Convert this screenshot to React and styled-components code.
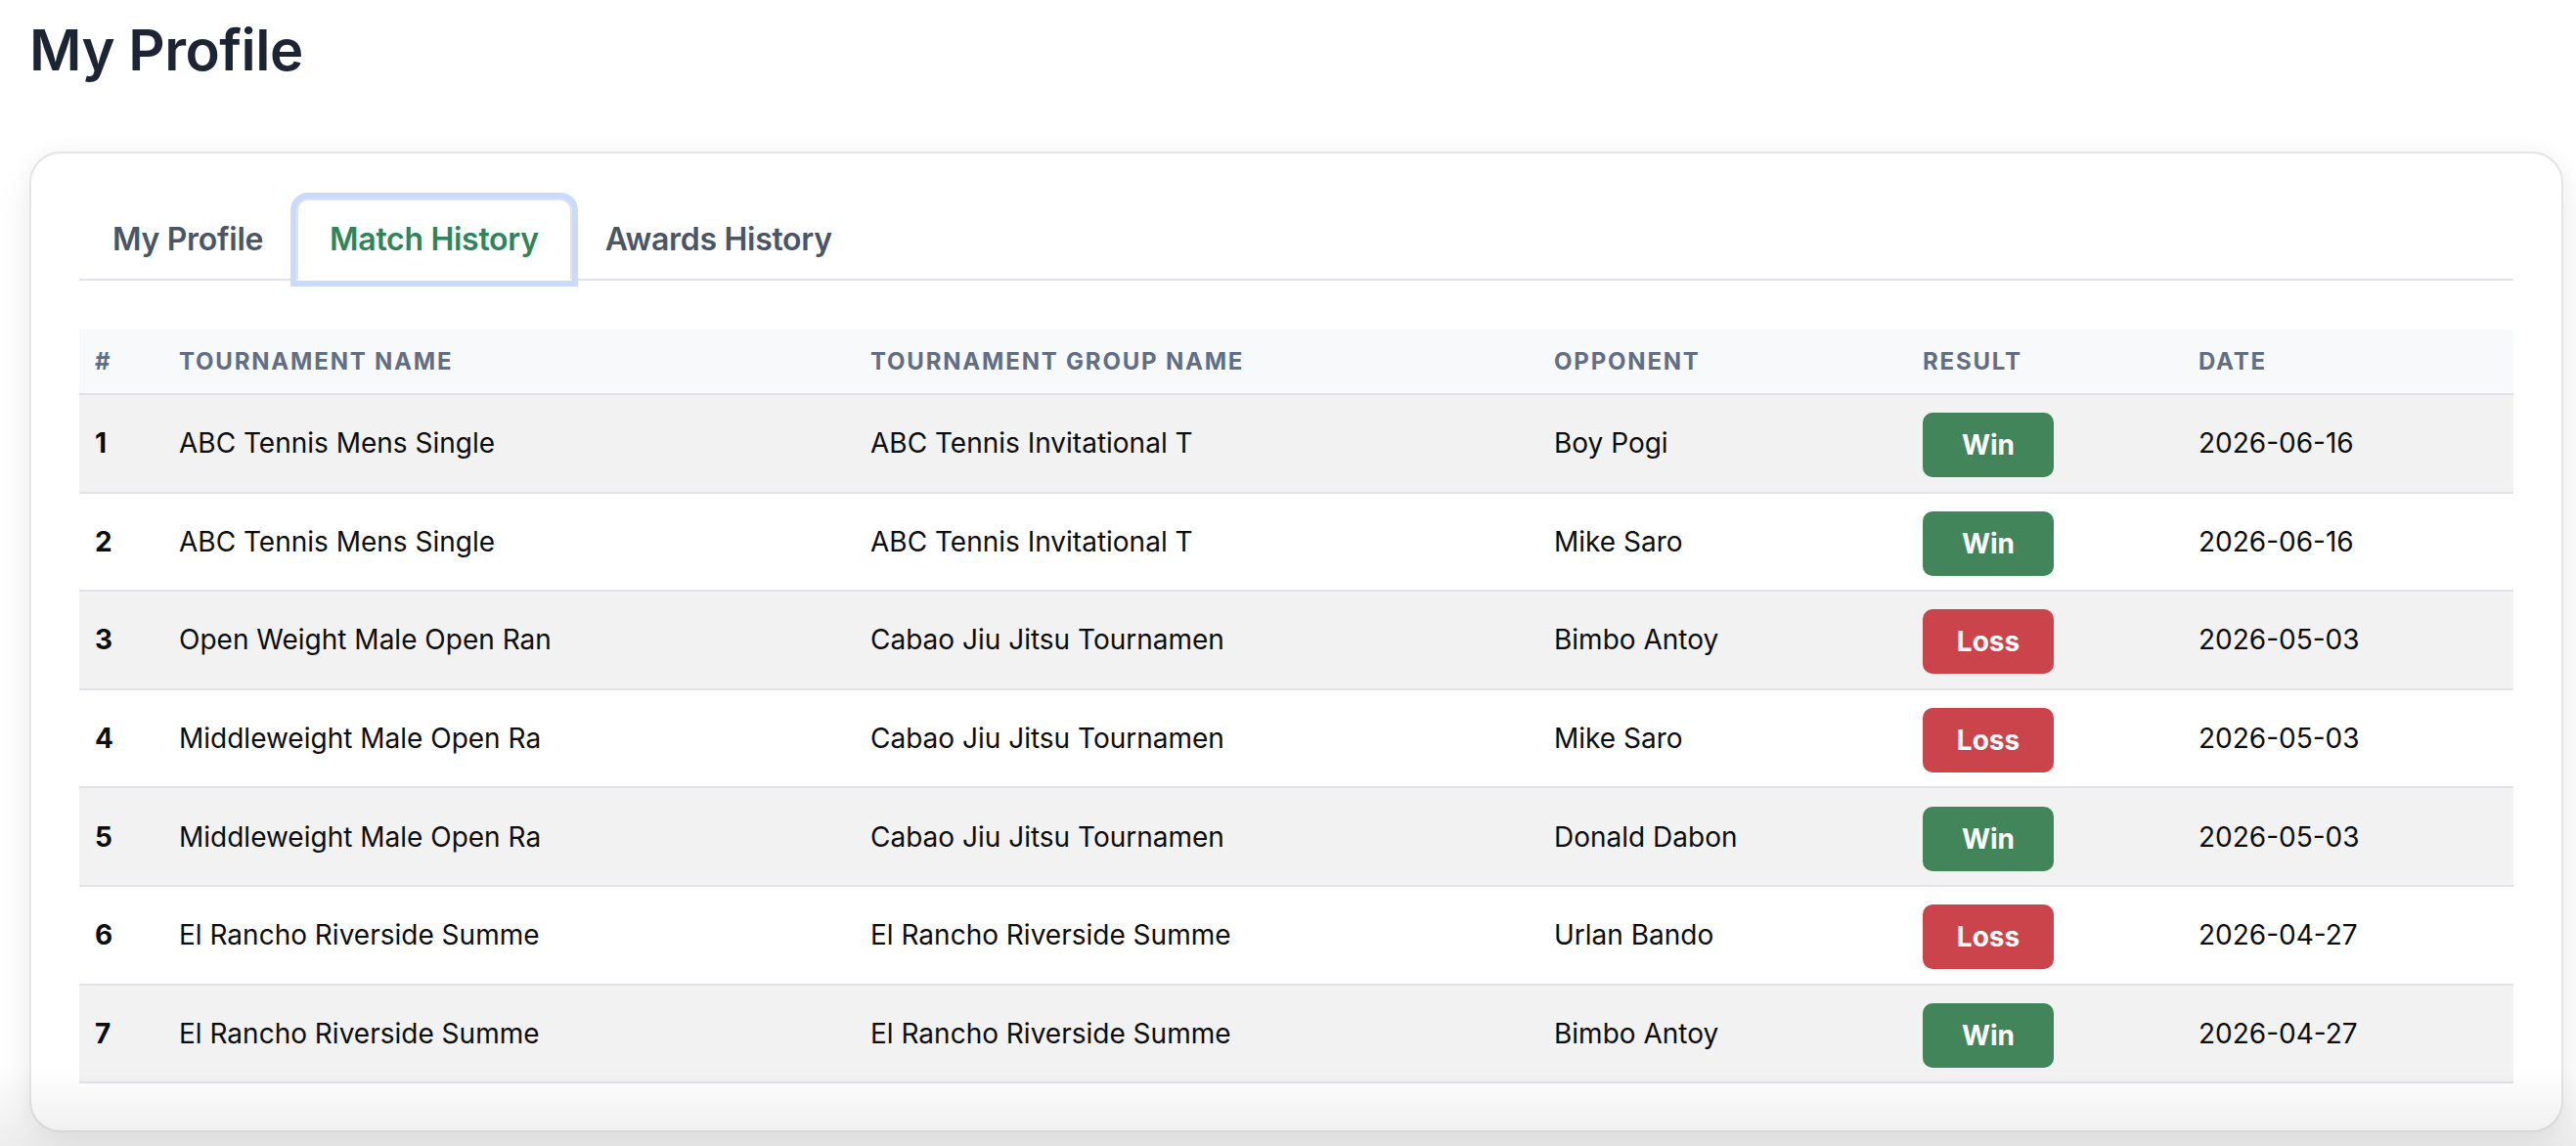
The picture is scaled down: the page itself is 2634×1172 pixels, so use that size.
import React, { useState } from "react";
import styled, { createGlobalStyle } from "styled-components";

const GlobalStyle = createGlobalStyle`
  html, body {
    margin: 0;
    padding: 0;
    background: #fff;
    font-family: Inter, "Noto Sans", "Liberation Sans", sans-serif;
  }
  * { box-sizing: border-box; }
`;

const Page = styled.main`
  padding: 15px 13px 40px 30px;
`;

// soft fade the screenshot shows along the bottom of the window
const BottomFade = styled.div`
  position: fixed;
  left: 0;
  right: 0;
  bottom: 0;
  height: 80px;
  pointer-events: none;
  background: linear-gradient(to bottom, rgba(0, 0, 0, 0), rgba(0, 0, 0, 0.07));
`;

const Title = styled.h1`
  margin: 0 0 68px 0;
  font-size: 58px;
  line-height: 72px;
  font-weight: 600;
  color: #1d2433;
  letter-spacing: -0.5px;
`;

const Card = styled.section`
  background: #fff;
  border: 2px solid #e4e5e9;
  border-radius: 32px;
  padding: 46px 49px 48px 49px;
  box-shadow: 0 16px 40px rgba(0, 0, 0, 0.07), 0 0 24px rgba(0, 0, 0, 0.03);
`;

const TabList = styled.div`
  display: flex;
  align-items: flex-end;
  border-bottom: 2px solid #e2e3e8;
  margin-bottom: 50px;
`;

const Tab = styled.button`
  font-family: inherit;
  font-size: 32px;
  font-weight: 600;
  line-height: 48px;
  letter-spacing: -0.3px;
  padding: 16px 32px;
  margin-bottom: -2px;
  background: ${(p) => (p.$active ? "#fff" : "transparent")};
  cursor: pointer;
  color: ${(p) => (p.$active ? "#2f855a" : "#4a5568")};
  border: 2px solid ${(p) => (p.$active ? "#e2e3e8" : "transparent")};
  border-bottom-color: ${(p) => (p.$active ? "#fff" : "transparent")};
  border-radius: 12px 12px 0 0;
  box-shadow: ${(p) => (p.$active ? "0 0 0 6px #c9dafb" : "none")};
  outline: none;
  position: relative;
  z-index: ${(p) => (p.$active ? 1 : 0)};
`;

const Table = styled.table`
  width: 100%;
  border-collapse: collapse;
  table-layout: fixed;
`;

const Col = styled.col`
  width: ${(p) => p.$w};
`;

const HeadRow = styled.tr`
  background: #f7f9fb;
  border-bottom: 2px solid #e2e3e8;
`;

const Th = styled.th`
  height: 66px;
  padding: 0 16px;
  text-align: left;
  font-size: 24px;
  font-weight: 700;
  letter-spacing: 1.8px;
  text-transform: uppercase;
  color: #626e85;
  white-space: nowrap;
`;

const Row = styled.tr`
  background: ${(p) => (p.$striped ? "#f2f2f2" : "#fff")};
  border-bottom: 2px solid #e2e3e8;
`;

const Td = styled.td`
  height: 100.6px;
  padding: 0 16px;
  font-size: 28px;
  font-weight: ${(p) => (p.$strong ? 700 : 400)};
  color: #0d0d0d;
  white-space: nowrap;
  overflow: hidden;
`;

const Badge = styled.span`
  display: inline-flex;
  align-items: center;
  justify-content: center;
  width: 134px;
  height: 66px;
  margin-top: 4px;
  border-radius: 10px;
  font-size: 28px;
  font-weight: 700;
  color: #fff;
  background: ${(p) => (p.$win ? "#42855b" : "#cb434b")};
`;

const tabs = ["My Profile", "Match History", "Awards History"];

const matches = [
  { id: 1, tournament: "ABC Tennis Mens Single", group: "ABC Tennis Invitational T", opponent: "Boy Pogi", win: true, date: "2026-06-16" },
  { id: 2, tournament: "ABC Tennis Mens Single", group: "ABC Tennis Invitational T", opponent: "Mike Saro", win: true, date: "2026-06-16" },
  { id: 3, tournament: "Open Weight Male Open Ran", group: "Cabao Jiu Jitsu Tournamen", opponent: "Bimbo Antoy", win: false, date: "2026-05-03" },
  { id: 4, tournament: "Middleweight Male Open Ra", group: "Cabao Jiu Jitsu Tournamen", opponent: "Mike Saro", win: false, date: "2026-05-03" },
  { id: 5, tournament: "Middleweight Male Open Ra", group: "Cabao Jiu Jitsu Tournamen", opponent: "Donald Dabon", win: true, date: "2026-05-03" },
  { id: 6, tournament: "El Rancho Riverside Summe", group: "El Rancho Riverside Summe", opponent: "Urlan Bando", win: false, date: "2026-04-27" },
  { id: 7, tournament: "El Rancho Riverside Summe", group: "El Rancho Riverside Summe", opponent: "Bimbo Antoy", win: true, date: "2026-04-27" },
];

const App = () => {
  const [active, setActive] = useState(1);

  return (
    <Page>
      <GlobalStyle />
      <Title>My Profile</Title>
      <Card>
        <TabList>
          {tabs.map((t, i) => (
            <Tab key={t} $active={i === active} onClick={() => setActive(i)}>
              {t}
            </Tab>
          ))}
        </TabList>
        <Table>
          <colgroup>
            <Col $w="86px" />
            <Col $w="707px" />
            <Col $w="699px" />
            <Col $w="377px" />
            <Col $w="282px" />
            <Col />
          </colgroup>
          <thead>
            <HeadRow>
              <Th>#</Th>
              <Th>Tournament Name</Th>
              <Th>Tournament Group Name</Th>
              <Th>Opponent</Th>
              <Th>Result</Th>
              <Th>Date</Th>
            </HeadRow>
          </thead>
          <tbody>
            {matches.map((m, i) => (
              <Row key={m.id} $striped={i % 2 === 0}>
                <Td $strong>{m.id}</Td>
                <Td>{m.tournament}</Td>
                <Td>{m.group}</Td>
                <Td>{m.opponent}</Td>
                <Td>
                  <Badge $win={m.win}>{m.win ? "Win" : "Loss"}</Badge>
                </Td>
                <Td>{m.date}</Td>
              </Row>
            ))}
          </tbody>
        </Table>
      </Card>
      <BottomFade />
    </Page>
  );
};

export default App;
